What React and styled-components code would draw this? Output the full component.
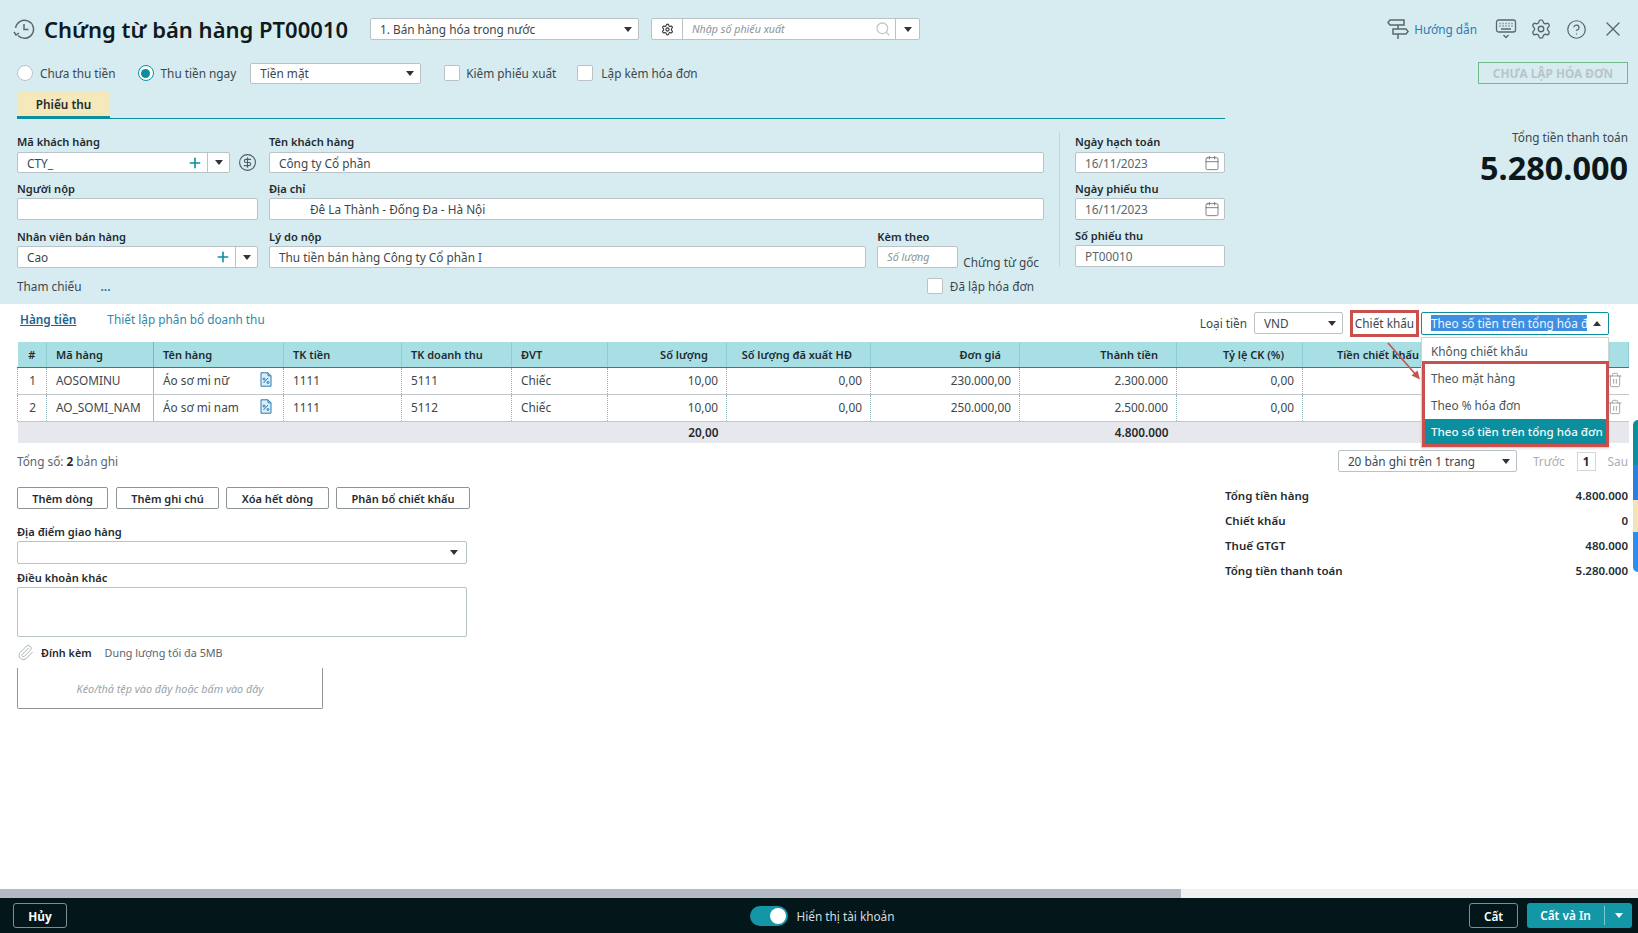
import React from 'react';
import styled, { createGlobalStyle } from 'styled-components';
import { Settings, CircleHelp, X, Calendar, Paperclip, Trash2, Search, CircleDollarSign, Plus } from 'lucide-react';

const Global = createGlobalStyle`
  html, body { margin: 0; height: 100%; background: #fff; }
  #root { height: 100%; }
  * { box-sizing: border-box; }
  body { font-family: "Noto Sans", "Open Sans", sans-serif; font-size: 11.8px; color: #3c474c; overflow: hidden; }
`;

const Page = styled.div`display: flex; flex-direction: column; height: 933px; position: relative; overflow: hidden;`;
const Header = styled.header`height: 304px; flex: none; background: #d7ecf0; padding: 18px 10px 0 17px;`;
const TopRow = styled.div`display: flex; align-items: center; height: 22px; margin-bottom: 22px;`;
const HistoryWrap = styled.span`display: flex; width: 22px; margin-left: -4px; margin-right: 9px; color: #5a676d;`;
const Title = styled.h1`margin: 0; width: 304px; font-size: 22px; line-height: 22px; font-weight: 600; color: #10191d; white-space: nowrap;`;
const Caret = styled.span`
  flex: none; width: 0; height: 0; border-left: 4px solid transparent; border-right: 4px solid transparent;
  ${p => p.$up ? 'border-bottom: 5px solid #333;' : `border-top: 5px solid ${p.$color || '#333'};`}
`;
const SelectBox = styled.div`
  display: flex; align-items: center; justify-content: space-between; flex: none;
  width: ${p => p.$w}px; height: ${p => p.$h || 22}px; margin-left: ${p => p.$ml || 0}px;
  padding: 0 6px 0 ${p => p.$pl || 9}px; background: #fff; border: 1px solid ${p => p.$bc || '#b9c3c7'}; border-radius: 2px;
  color: #3c474c; white-space: nowrap;
`;
const Group = styled.div`display: flex; align-items: stretch; width: 269px; height: 22px; margin-left: 12px; background: #fff; border: 1px solid #b9c3c7; border-radius: 2px;`;
const GroupBtn = styled.span`display: flex; align-items: center; justify-content: center; flex: none; width: ${p => p.$w}px; color: #333;`;
const GroupInput = styled.span`
  flex: 1; display: flex; align-items: center; justify-content: space-between; padding: 0 4px 0 9px;
  border-left: 1px solid #b9c3c7; border-right: 1px solid #b9c3c7; font-style: italic; color: #8b9497; font-size: 10.7px;
`;
const Tools = styled.div`display: flex; align-items: center; margin-left: auto; color: #58666c;`;
const GuideLink = styled.span`display: flex; align-items: center; gap: 5px; color: #2b7ab0; margin-right: 17px; white-space: nowrap;`;
const ToolIcon = styled.span`display: flex; justify-content: center; width: 24px; margin-left: ${p => p.$ml ?? 11}px; margin-right: ${p => p.$mr || 0}px;`;

const OptionRow = styled.div`display: flex; align-items: center; height: 22px; margin-bottom: 7px;`;
const Choice = styled.label`display: flex; align-items: center; gap: ${p => p.$gap || 7}px; margin-left: ${p => p.$ml || 0}px; white-space: nowrap;`;
const Radio = styled.span`
  width: 16px; height: 16px; flex: none; border-radius: 50%; background: #fff; border: 1px solid ${p => p.$on ? '#0b8f9f' : '#b9c3c7'};
  display: flex; align-items: center; justify-content: center;
  &::after { content: ""; width: 9px; height: 9px; border-radius: 50%; background: ${p => p.$on ? '#0b8f9f' : 'transparent'}; }
`;
const Check = styled.span`width: 16px; height: 16px; flex: none; background: #fff; border: 1px solid #b9c3c7; border-radius: 2px;`;
const InvoiceBtn = styled.div`
  margin-left: auto; width: 150px; height: 22px; display: flex; align-items: center; justify-content: center;
  border: 1px solid #6fb98a; color: #b9c4c9; font-weight: 700; white-space: nowrap;
`;
const Main = styled.div`display: flex;`;
const FormSide = styled.div`width: 1208px; flex: none;`;
const TabBar = styled.div`height: 28px; border-bottom: 1px solid #0b8f9f;`;
const Tab = styled.div`
  width: 93px; height: 28px; display: flex; align-items: center; justify-content: center; background: #f5e8bb;
  border-bottom: 3px solid #0b8f9f; border-radius: 3px 3px 0 0; font-weight: 600; color: #1f2b30;
`;
const FormBody = styled.div`display: flex; align-items: flex-start; padding-top: 16px;`;
const Fields = styled.div`width: 1027px; flex: none;`;
const FieldGrid = styled.div`display: grid; grid-template-columns: 241px 1fr; column-gap: 11px; row-gap: 8px;`;
const Field = styled.div`display: flex; flex-direction: column; min-width: 0; width: ${p => p.$w ? p.$w + 'px' : 'auto'}; flex: ${p => p.$w ? 'none' : '1'}; margin-top: ${p => p.$mt || 0}px;`;
const Label = styled.div`height: 17px; line-height: ${p => p.$lh || 15}px; font-size: 11.1px; font-weight: 600; color: #1f2b30; white-space: nowrap;`;
const Input = styled.div`
  display: flex; align-items: center; height: ${p => p.$h || 22}px; padding: 0 9px; background: #fff;
  border: 1px solid #b9c3c7; border-radius: 2px; white-space: nowrap; color: ${p => p.$ph ? '#8b9497' : '#3c474c'};
  font-style: ${p => p.$ph ? 'italic' : 'normal'}; font-size: ${p => p.$ph ? '10.7px' : '11.8px'};
  ${p => p.$indent ? `padding-left: ${p.$indent}px;` : ''}
`;
const DateInput = styled(Input)`justify-content: space-between; padding-right: 4px; color: #58666c;`;
const ComboRow = styled.div`display: flex; align-items: center; gap: 8px; color: #4f5d63;`;
const Combo = styled.div`
  display: flex; align-items: center; height: ${p => p.$h || 22}px; flex: none; width: ${p => p.$w}px; margin-top: ${p => p.$mt || 0}px;
  background: #fff; border: 1px solid #b9c3c7; border-radius: 2px;
`;
const ComboText = styled.span`flex: 1; padding-left: 9px; color: #3c474c;`;
const ComboPlus = styled.span`display: flex; color: #0b8f9f; margin-right: 4px;`;
const ComboDrop = styled.span`display: flex; align-items: center; justify-content: center; align-self: stretch; width: 22px; border-left: 1px solid #b9c3c7;`;
const ReasonRow = styled.div`display: flex; gap: 11px; align-items: flex-end; padding-right: 5px;`;
const OriginDoc = styled.span`margin-left: -6px; margin-bottom: -3px; line-height: 17px; white-space: nowrap;`;
const MiscRow = styled.div`display: flex; align-items: center; height: 18px; margin-top: 9px;`;
const RefLink = styled.span`margin-left: 19px; color: #2b7ab0; font-weight: 700; line-height: 12px;`;
const Spacer = styled.span`flex: ${p => p.$w ? 'none' : '1'}; width: ${p => p.$w ? p.$w + 'px' : 'auto'};`;
const Divider = styled.div`width: 1px; height: 135px; margin: -3px 15px 0 15px; background: #c3d6da;`;
const DateCol = styled.div`width: 150px; flex: none; display: flex; flex-direction: column; gap: 8px;`;
const TotalSide = styled.div`flex: 1; text-align: right; padding-top: 38px;`;
const TotalLabel = styled.div`line-height: 16px;`;
const TotalValue = styled.div`font-size: 32.4px; line-height: 48px; font-weight: 700; color: #0e181c; margin-top: -2px;`;

const Content = styled.main`flex: 1; padding: 8px 10px 0 17px; min-height: 0;`;
const ToolRow = styled.div`display: flex; align-items: center; height: 22px; margin-bottom: 8px; position: relative; z-index: 3;`;
const TabLink = styled.span`margin-top: -8px; margin-right: ${p => p.$mr || 0}px; margin-left: ${p => p.$ml || 0}px; color: ${p => p.$on ? '#17648e' : '#2f87a8'}; font-weight: ${p => p.$on ? 600 : 400}; text-decoration: ${p => p.$on ? 'underline' : 'none'};`;
const CurrencyLabel = styled.span`margin-right: 7px;`;
const DiscountLabel = styled.span`
  display: flex; align-items: center; justify-content: center; width: 69px; height: 27px; margin: 0 2px 0 7px;
  border: 3px solid #c9504c; white-space: nowrap; background: #fff; position: relative; z-index: 1;
`;
const DiscountWrap = styled.div`position: relative; flex: none; width: 188px; margin-right: 19px;`;
const DiscountSelect = styled(SelectBox)`height: 23px; border-color: #0b8f9f; padding: 0 7px 0 9px; overflow: hidden;`;
const Highlighted = styled.span`background: #3f8ee0; color: #eef6ff; width: 156px; overflow: hidden; white-space: nowrap; line-height: 16px; display: block;`;
const Menu = styled.div`position: absolute; left: 0; right: 0; top: 25px; background: #fff; border: 1px solid #cfd4d7; padding-bottom: 3px; box-shadow: 0 1px 2px rgba(0,0,0,.1);`;
const MenuItem = styled.div`
  height: ${p => p.$on ? 25 : 27}px; display: flex; align-items: center; padding-left: 9px; white-space: nowrap;
  ${p => p.$on ? 'background:#0b8f9f;color:#f1fbfc;font-weight:500;font-size:11.6px;' : 'color:#4a5559;'}
`;
const MenuMark = styled.div`position: absolute; left: 0; right: -1px; top: 23px; height: 86px; border: 3px solid #c9504c; pointer-events: none;`;
const ArrowSvg = styled.svg`position: absolute; left: 1371px; top: 31px; overflow: visible;`;

const Table = styled.table`width: 1611px; border-collapse: collapse; table-layout: fixed; position: relative; z-index: 1;`;
const Th = styled.th`
  height: 25px; padding: 0 ${p => p.$align === 'right' ? 18 : 9}px 0 9px; background: #a8dfe5; border-bottom: 1px solid #0b8f9f; border-right: 1px solid ${p => p.$strong ? '#72b9c4' : '#8fcdd5'};
  font-size: 11px; font-weight: 600; color: #1f2b30; text-align: ${p => p.$align || 'left'}; white-space: nowrap;
`;
const Td = styled.td`
  height: 27px; padding: 0 8px 2px 9px; background: #fff; border-bottom: 1px solid #c3c8cc; border-right: ${p => p.$strong ? '1px solid #8fc0c8' : p.$none ? '0' : '1px dotted #8fb5bb'};
  ${p => p.$first ? 'border-left: 1px dotted #8fb5bb;' : ''}
  text-align: ${p => p.$align || 'left'}; white-space: nowrap;
`;
const NameCell = styled.span`display: flex; align-items: center; justify-content: space-between; padding-right: 3px; color: #3c474c;`;
const TrashWrap = styled.span`display: flex; justify-content: flex-end; color: #7c868a; margin-right: -2px;`;
const SumCell = styled.td`height: 22px; padding: 0 8px 0 9px; background: #e7e8ed; text-align: right; font-weight: 600; color: #1f2b30;`;

const PagerRow = styled.div`display: flex; align-items: center; height: 22px; margin-top: 7px; color: #58666c;`;
const Count = styled.span`flex: 1; b { color: #1f2b30; font-weight: 700; }`;
const PagerText = styled.span`color: #a7afb3; margin-left: ${p => p.$ml}px;`;
const PageNo = styled.span`width: 19px; height: 19px; margin-left: 12px; display: flex; align-items: center; justify-content: center; border: 1px solid #d2d7da; color: #1f2b30; font-weight: 700;`;
const Lower = styled.div`display: flex; justify-content: space-between; margin-top: 15px;`;
const LeftCol = styled.div`width: 453px; flex: none;`;
const ButtonRow = styled.div`display: flex; gap: 7px; height: 22px; margin-bottom: 15px;`;
const Btn = styled.div`
  width: ${p => p.$w}px; margin-right: ${p => p.$mr || 0}px; display: flex; align-items: center; justify-content: center; background: #fff; border: 1px solid #8d9599;
  border-radius: 2px; font-size: 11px; font-weight: 600; color: #1f2b30; white-space: nowrap;
`;
const Area = styled.div`width: 450px; height: ${p => p.$h}px; background: #fff; border: 1px solid #b9c3c7; border-radius: 2px; margin-bottom: ${p => p.$mb || 0}px;`;
const SelectLine = styled(Area)`display: flex; align-items: center; justify-content: flex-end; padding-right: 8px;`;
const AttachRow = styled.div`display: flex; align-items: center; height: 16px; margin-top: 7px; color: #58666c; font-size: 10.8px;`;
const AttachName = styled.span`margin: 0 13px 0 7px; font-weight: 600; color: #1f2b30;`;
const ClipWrap = styled.span`display: flex; color: #a9b1b5;`;
const DropZone = styled.div`
  width: 306px; height: 41px; margin-top: 8px; display: flex; align-items: center; justify-content: center; font-style: italic; color: #9aa3a7; font-size: 10.8px;
  border: 1px solid #8d9599; border-top: 0; border-radius: 0 0 2px 2px;
`;
const Summary = styled.div`width: 403px; flex: none; margin-top: -4px;`;
const SumRow = styled.div`display: flex; justify-content: space-between; height: 25px; align-items: center; font-size: 11.5px; font-weight: 600; color: #1f2b30;`;
const ScrollTrack = styled.div`height: 9px; flex: none; background: #eef0f1;`;
const ScrollThumb = styled.div`height: 100%; width: 1181px; background: #b5bac2;`;
const Footer = styled.footer`height: 35px; flex: none; background: #03171b; display: grid; grid-template-columns: 1fr auto 1fr; align-items: center; padding: 0 6px 0 13px;`;
const CancelBtn = styled.div`width: 54px; height: 25px; display: flex; align-items: center; justify-content: center; border: 1px solid #7d8d91; border-radius: 3px; color: #fff; font-weight: 700;`;
const ToggleGroup = styled.div`display: flex; align-items: center; gap: 8px; color: #d5dcde;`;
const Toggle = styled.span`width: 38px; height: 20px; border-radius: 10px; background: #1397a6; display: flex; align-items: center; justify-content: flex-end; padding-right: 2px; &::after { content: ""; width: 16px; height: 16px; border-radius: 50%; background: #fff; }`;
const FootRight = styled.div`display: flex; justify-content: flex-end; gap: 9px;`;
const SaveBtn = styled(CancelBtn)`width: 49px; font-weight: 600;`;
const SavePrint = styled.div`width: 105px; height: 25px; display: flex; align-items: center; background: #1397a6; border-radius: 3px; color: #fff; font-weight: 600;`;
const SavePrintText = styled.span`width: 78px; text-align: center; border-right: 1px solid #7cc7d0; line-height: 19px;`;
const SavePrintDrop = styled.span`flex: 1; display: flex; justify-content: center;`;
const SideTab = styled.div`position: absolute; right: 0; top: 420px; width: 5px; height: 152px; border-radius: 5px 0 0 5px; overflow: hidden; display: flex; flex-direction: column; z-index: 5;`;
const SideSeg = styled.div`height: ${p => p.$h}px; background: ${p => p.$c};`;

const HistoryIcon = () => (
  <svg width="22" height="22" viewBox="0 0 22 22" fill="none" stroke="currentColor" strokeWidth="1.5">
    <path d="M5 17.5A9 9 0 1 0 2.6 10" /><path d="M11 6v5.5h4.5" /><path d="M1 14l2 3 3-2" />
  </svg>
);
const SignIcon = () => (
  <svg width="22" height="24" viewBox="0 0 22 24" fill="none" stroke="#5a686e" strokeWidth="1.5">
    <path d="M3 3h14v5H3L1 5.5z" /><path d="M6 12h13l2 2.5-2 2.5H6z" /><path d="M11 8v4M11 17v5" />
  </svg>
);
const KeyIcon = () => (
  <svg width="22" height="22" viewBox="0 0 22 22" fill="none" stroke="#5a686e" strokeWidth="1.3">
    <rect x="1.5" y="2" width="19" height="12" rx="2" />
    <path d="M4.5 5.5h1M7.5 5.5h1M10.5 5.5h1M13.5 5.5h1M16.5 5.5h1M4.5 8h1M7.5 8h1M10.5 8h1M13.5 8h1M16.5 8h1M6 11h10" />
    <path d="M8.5 17l2.5 2.5 2.5-2.5" />
  </svg>
);
const PercentFile = () => (
  <svg width="12" height="15" viewBox="0 0 12 15" fill="#d9eef8" stroke="#2b7ab0" strokeWidth="1">
    <path d="M1 .8h7l3 3v10.4H1z" /><path d="M8 .8v3h3" fill="none" />
    <path d="M3.5 11l4.5-5" /><circle cx="4" cy="7" r="1" fill="none" /><circle cx="8" cy="10.5" r="1" fill="none" />
  </svg>
);

const rows = [
  ['1', 'AOSOMINU', 'Áo sơ mi nữ', '1111', '5111', 'Chiếc', '10,00', '0,00', '230.000,00', '2.300.000', '0,00'],
  ['2', 'AO_SOMI_NAM', 'Áo sơ mi nam', '1111', '5112', 'Chiếc', '10,00', '0,00', '250.000,00', '2.500.000', '0,00'],
];
const widths = [29, 107, 130, 118, 110, 96, 119, 144, 149, 157, 126, 135, 191];

const ComboField = ({ text, w, h, mt }) => (
  <Combo $w={w} $h={h} $mt={mt}>
    <ComboText>{text}</ComboText>
    <ComboPlus><Plus size={16} strokeWidth={2.4} /></ComboPlus>
    <ComboDrop><Caret /></ComboDrop>
  </Combo>
);

export default function App() {
  return (
    <Page>
      <Global />
      <Header>
        <TopRow>
          <HistoryWrap><HistoryIcon /></HistoryWrap>
          <Title>Chứng từ bán hàng PT00010</Title>
          <SelectBox $w={269} $ml={22}>1. Bán hàng hóa trong nước<Caret /></SelectBox>
          <Group>
            <GroupBtn $w={30}><Settings size={13} /></GroupBtn>
            <GroupInput>Nhập số phiếu xuất<Search size={16} color="#c2c7c9" /></GroupInput>
            <GroupBtn $w={23}><Caret /></GroupBtn>
          </Group>
          <Tools>
            <GuideLink><SignIcon />Hướng dẫn</GuideLink>
            <ToolIcon $ml={0}><KeyIcon /></ToolIcon>
            <ToolIcon><Settings size={22} strokeWidth={1.5} /></ToolIcon>
            <ToolIcon><CircleHelp size={21} strokeWidth={1.4} /></ToolIcon>
            <ToolIcon $ml={13} $mr={3}><X size={26} strokeWidth={1.4} /></ToolIcon>
          </Tools>
        </TopRow>
        <OptionRow>
          <Choice><Radio />Chưa thu tiền</Choice>
          <Choice $ml={22}><Radio $on />Thu tiền ngay</Choice>
          <SelectBox $w={171} $h={21} $ml={14}>Tiền mặt<Caret /></SelectBox>
          <Choice $ml={23} $gap={6}><Check />Kiêm phiếu xuất</Choice>
          <Choice $ml={21} $gap={8}><Check />Lập kèm hóa đơn</Choice>
          <InvoiceBtn>CHƯA LẬP HÓA ĐƠN</InvoiceBtn>
        </OptionRow>
        <Main>
          <FormSide>
            <TabBar><Tab>Phiếu thu</Tab></TabBar>
            <FormBody>
              <Fields>
                <FieldGrid>
                  <Field>
                    <Label $lh={13}>Mã khách hàng</Label>
                    <ComboRow><ComboField text="CTY_" w={213} h={21} /><CircleDollarSign size={19} strokeWidth={1.4} /></ComboRow>
                  </Field>
                  <Field><Label $lh={13}>Tên khách hàng</Label><Input $h={21}>Công ty Cổ phần</Input></Field>
                  <Field><Label $lh={16}>Người nộp</Label><Input>&nbsp;</Input></Field>
                  <Field><Label $lh={16}>Địa chỉ</Label><Input $indent={40}>Đê La Thành - Đống Đa - Hà Nội</Input></Field>
                  <Field $mt={1}><Label $lh={16}>Nhân viên bán hàng</Label><ComboField text="Cao" w={241} /></Field>
                  <ReasonRow>
                    <Field><Label $lh={16}>Lý do nộp</Label><Input>Thu tiền bán hàng Công ty Cổ phần I</Input></Field>
                    <Field $w={81}><Label $lh={16}>Kèm theo</Label><Input $ph>Số lượng</Input></Field>
                    <OriginDoc>Chứng từ gốc</OriginDoc>
                  </ReasonRow>
                </FieldGrid>
                <MiscRow>
                  Tham chiếu<RefLink>...</RefLink>
                  <Spacer />
                  <Choice $gap={7}><Check />Đã lập hóa đơn</Choice>
                  <Spacer $w={10} />
                </MiscRow>
              </Fields>
              <Divider />
              <DateCol>
                <Field><Label $lh={13}>Ngày hạch toán</Label><DateInput $h={21}>16/11/2023<Calendar size={16} strokeWidth={1.2} /></DateInput></Field>
                <Field><Label $lh={16}>Ngày phiếu thu</Label><DateInput>16/11/2023<Calendar size={16} strokeWidth={1.2} /></DateInput></Field>
                <Field><Label $lh={16}>Số phiếu thu</Label><DateInput>PT00010</DateInput></Field>
              </DateCol>
            </FormBody>
          </FormSide>
          <TotalSide>
            <TotalLabel>Tổng tiền thanh toán</TotalLabel>
            <TotalValue>5.280.000</TotalValue>
          </TotalSide>
        </Main>
      </Header>

      <Content>
        <ToolRow>
          <TabLink $on $ml={3} $mr={31}>Hàng tiền</TabLink>
          <TabLink>Thiết lập phân bổ doanh thu</TabLink>
          <Spacer />
          <CurrencyLabel>Loại tiền</CurrencyLabel>
          <SelectBox $w={89}>VND<Caret /></SelectBox>
          <DiscountLabel>Chiết khấu</DiscountLabel>
          <DiscountWrap>
            <DiscountSelect $w={188}>
              <Highlighted>Theo số tiền trên tổng hóa đơn</Highlighted><Caret $up />
            </DiscountSelect>
            <Menu>
              <MenuItem>Không chiết khấu</MenuItem>
              <MenuItem>Theo mặt hàng</MenuItem>
              <MenuItem>Theo % hóa đơn</MenuItem>
              <MenuItem $on>Theo số tiền trên tổng hóa đơn</MenuItem>
              <MenuMark />
            </Menu>
          </DiscountWrap>
          <ArrowSvg width="34" height="38" viewBox="0 0 34 38" fill="none">
            <path d="M0 0L29 33" stroke="#c9504c" strokeWidth="1.6" />
            <path d="M32 36.5L23.5 32.5L29.5 27.5Z" fill="#c9504c" />
          </ArrowSvg>
        </ToolRow>
        <Table>
          <colgroup>{widths.map((w, i) => <col key={i} style={{ width: w }} />)}</colgroup>
          <thead>
            <tr>
              <Th $align="center">#</Th>
              <Th $strong>Mã hàng</Th>
              <Th>Tên hàng</Th>
              <Th>TK tiền</Th>
              <Th>TK doanh thu</Th>
              <Th>ĐVT</Th>
              <Th $align="right">Số lượng</Th>
              <Th $align="right">Số lượng đã xuất HĐ</Th>
              <Th $align="right">Đơn giá</Th>
              <Th $align="right">Thành tiền</Th>
              <Th $align="right">Tỷ lệ CK (%)</Th>
              <Th $align="right">Tiền chiết khấu</Th>
              <Th />
            </tr>
          </thead>
          <tbody>
            {rows.map(r => (
              <tr key={r[0]}>
                <Td $first $align="center">{r[0]}</Td>
                <Td $strong>{r[1]}</Td>
                <Td><NameCell>{r[2]}<PercentFile /></NameCell></Td>
                <Td>{r[3]}</Td>
                <Td>{r[4]}</Td>
                <Td>{r[5]}</Td>
                <Td $align="right">{r[6]}</Td>
                <Td $align="right">{r[7]}</Td>
                <Td $align="right">{r[8]}</Td>
                <Td $align="right">{r[9]}</Td>
                <Td $align="right">{r[10]}</Td>
                <Td $none />
                <Td $none><TrashWrap><Trash2 size={16} strokeWidth={1.1} /></TrashWrap></Td>
              </tr>
            ))}
            <tr>
              <SumCell colSpan={7}>20,00</SumCell>
              <SumCell colSpan={3}>4.800.000</SumCell>
              <SumCell colSpan={3} />
            </tr>
          </tbody>
        </Table>
        <PagerRow>
          <Count>Tổng số: <b>2</b> bản ghi</Count>
          <SelectBox $w={179}>20 bản ghi trên 1 trang<Caret /></SelectBox>
          <PagerText $ml={16}>Trước</PagerText>
          <PageNo>1</PageNo>
          <PagerText $ml={12}>Sau</PagerText>
        </PagerRow>
        <Lower>
          <LeftCol>
            <ButtonRow>
              <Btn $w={91} $mr={1}>Thêm dòng</Btn>
              <Btn $w={103}>Thêm ghi chú</Btn>
              <Btn $w={103}>Xóa hết dòng</Btn>
              <Btn $w={134}>Phân bổ chiết khấu</Btn>
            </ButtonRow>
            <Label>Địa điểm giao hàng</Label>
            <SelectLine $h={23} $mb={6}><Caret /></SelectLine>
            <Label>Điều khoản khác</Label>
            <Area $h={50} />
            <AttachRow>
              <ClipWrap><Paperclip size={17} strokeWidth={1.4} /></ClipWrap>
              <AttachName>Đính kèm</AttachName>
              Dung lượng tối đa 5MB
            </AttachRow>
            <DropZone>Kéo/thả tệp vào đây hoặc bấm vào đây</DropZone>
          </LeftCol>
          <Summary>
            <SumRow><span>Tổng tiền hàng</span><span>4.800.000</span></SumRow>
            <SumRow><span>Chiết khấu</span><span>0</span></SumRow>
            <SumRow><span>Thuế GTGT</span><span>480.000</span></SumRow>
            <SumRow><span>Tổng tiền thanh toán</span><span>5.280.000</span></SumRow>
          </Summary>
        </Lower>
      </Content>

      <ScrollTrack><ScrollThumb /></ScrollTrack>
      <Footer>
        <CancelBtn>Hủy</CancelBtn>
        <ToggleGroup><Toggle />Hiển thị tài khoản</ToggleGroup>
        <FootRight>
          <SaveBtn>Cất</SaveBtn>
          <SavePrint><SavePrintText>Cất và In</SavePrintText><SavePrintDrop><Caret $color="#fff" /></SavePrintDrop></SavePrint>
        </FootRight>
      </Footer>
      <SideTab>
        <SideSeg $h={45} $c="#0b8f9f" />
        <SideSeg $h={35} $c="#2b7fe0" />
        <SideSeg $h={32} $c="#f3e3b5" />
        <SideSeg $h={40} $c="#2f8cf0" />
      </SideTab>
    </Page>
  );
}
